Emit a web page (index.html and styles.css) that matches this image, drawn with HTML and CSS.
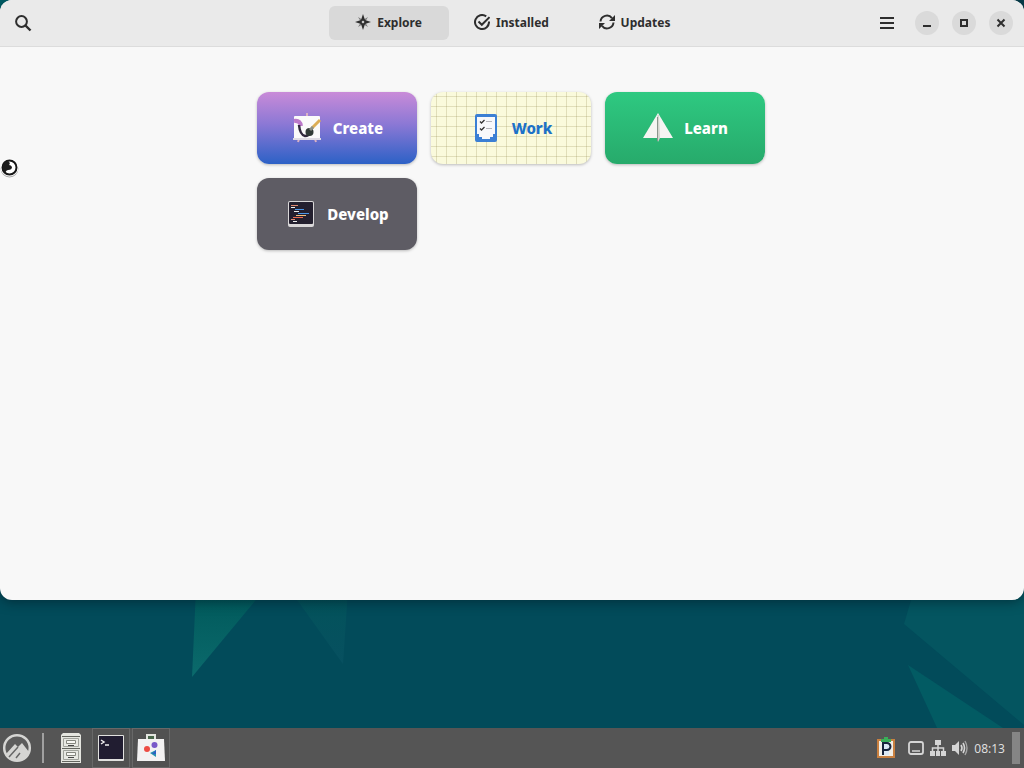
FILE: index.html
```html
<!DOCTYPE html>
<html lang="en">
<head>
<meta charset="utf-8">
<title>Software</title>
<link rel="stylesheet" href="styles.css">
</head>
<body>
<div class="desktop">
  <svg class="wallpaper" viewBox="0 0 1024 768" preserveAspectRatio="none" aria-hidden="true">
    <defs>
      <linearGradient id="facet" x1="0" y1="0" x2="0" y2="1"><stop offset="0" stop-color="#00585a"/><stop offset="1" stop-color="#0b6a6c"/></linearGradient>
      <linearGradient id="facet-dim" x1="0" y1="0" x2="0" y2="1"><stop offset="0" stop-color="#02535a"/><stop offset="1" stop-color="#075060"/></linearGradient>
    </defs>
    <rect width="1024" height="768" fill="#024b5a"/>
    <path d="M196 590H264L192 677Z" fill="url(#facet)"/>
    <path d="M290 590H348L343 664Z" fill="url(#facet-dim)"/>
    <path d="M914 590H1024V725L904 624Z" fill="#045560"/>
    <path d="M908 665L1006 730H938Z" fill="#025b63"/>
    <path d="M0 0H20V20H0Z" fill="#006068"/>
    <path d="M1000 0H1024V20H1000Z" fill="#063e4c"/>
  </svg>

  <main class="window">
    <header class="titlebar">
      <div class="bar-start">
        <button class="flat-button" aria-label="Search"><svg width="18" height="18" viewBox="0 0 18 18"><circle cx="7.5" cy="7.5" r="5.4" fill="none" stroke="#2e2e2e" stroke-width="2"/><path d="M11.5 11.5L16.5 16.5" stroke="#2e2e2e" stroke-width="2.4"/></svg></button>
      </div>
      <nav class="tabs" aria-label="Views">
        <button class="tab tab-active"><svg width="16" height="16" viewBox="0 0 16 16"><path d="M3 3L8 6L13 3L10 8L13 13L8 10L3 13L6 8Z" fill="#777"/><path d="M8 0L10 6L16 8L10 10L8 16L6 10L0 8L6 6Z" fill="#2e2e2e"/><path d="M8 6.500L9.500 8L8 9.500L6.500 8Z" fill="#ddd"/></svg>Explore</button>
        <button class="tab"><svg width="16" height="16" viewBox="0 0 16 16" fill="none" stroke="#2e2e2e" stroke-width="2"><path d="M12.2 2.4A7 7 0 1 0 15 7.5"/><path d="M4.5 7.5L7.8 10.8L15.5 3.1"/></svg>Installed</button>
        <button class="tab"><svg width="16" height="16" viewBox="0 0 16 16"><g fill="none" stroke="#2e2e2e" stroke-width="2"><path d="M1.5 7.5A6.4 6.4 0 0 1 13 4.2"/><path d="M14.5 8.5A6.4 6.4 0 0 1 3 11.8"/></g><path d="M16 1V7H10ZM0 15V9H6Z" fill="#2e2e2e"/></svg>Updates</button>
      </nav>
      <div class="bar-end">
        <button class="flat-button" aria-label="Main menu"><svg width="14" height="14" viewBox="0 0 14 14"><path d="M0 2H14M0 7H14M0 12H14" stroke="#2e2e2e" stroke-width="2"/></svg></button>
        <div class="controls">
          <button class="control" aria-label="Minimize"><svg width="10" height="10" viewBox="0 0 10 10"><path d="M1 8H9" stroke="#2e2e2e" stroke-width="2"/></svg></button>
          <button class="control" aria-label="Maximize"><svg width="10" height="10" viewBox="0 0 10 10"><path d="M2 2H8V8H2Z" fill="none" stroke="#2e2e2e" stroke-width="2"/></svg></button>
          <button class="control" aria-label="Close"><svg width="10" height="10" viewBox="0 0 10 10"><path d="M1.5 1.5L8.5 8.5M8.5 1.5L1.5 8.5" stroke="#2e2e2e" stroke-width="2"/></svg></button>
        </div>
      </div>
    </header>
    <div class="categories">
      <button class="tile tile-create"><svg width="32" height="32" viewBox="0 0 32 32"><path d="M16 1V4M8 27L7 30M24 27L25 30" stroke="#dab2c4" stroke-width="2"/><rect x="3" y="4" width="26" height="23" rx="1" fill="#fafafa"/><path d="M2 26H30V28H2Z" fill="#dedbe4"/><path d="M3 9Q9 8 10 14" fill="none" stroke="#bb79c9" stroke-width="4"/><path d="M8 13Q9 23 14 24Q18 24 20 20" fill="none" stroke="#30283c" stroke-width="2.500"/><circle cx="18.500" cy="20" r="4" fill="#303a36"/><path d="M21 16L29 8" stroke="#dcad55" stroke-width="3"/><path d="M19 18L22 15" stroke="#8b8f86" stroke-width="3"/></svg>Create</button>
      <button class="tile tile-work"><svg width="32" height="32" viewBox="0 0 32 32"><rect x="5" y="2" width="22" height="28" rx="2" fill="#3b7fd4"/><path d="M7 5H25V22H23V25H20V27H12V25H9V22H7Z" fill="#f7f8fb"/><path d="M10 9.500L11.500 11L14.500 8M10 16.500L11.500 18L14.500 15" fill="none" stroke="#333" stroke-width="1.300"/><path d="M16 9.500H22M16 16.500H22" stroke="#b5b5ba"/></svg>Work</button>
      <button class="tile tile-learn"><svg width="32" height="32" viewBox="0 0 32 32"><path d="M16 1L31 26H1Z" fill="#f5f4f2"/><path d="M15.500 3H17L18 26L16 30L15 26Z" fill="#d3d5cf"/><path d="M15.500 5V29" stroke="#8b958d"/></svg>Learn</button>
      <button class="tile tile-develop"><svg width="32" height="32" viewBox="0 0 32 32"><rect x="3" y="3" width="26" height="26" rx="2" fill="#d9d7d8"/><rect x="4" y="4" width="24" height="22" rx="1" fill="#24202f"/><path d="M6 7.500H13M6 21.500H10" stroke="#e08a70"/><path d="M6 9.500H10M9 13.500H14M8 23.500H12" stroke="#eee"/><path d="M10 11.500H19M13 15.500H24" stroke="#4a96e8"/><path d="M11 17.500H21" stroke="#f0c080"/><path d="M8 19.500H18" stroke="#ee6a50"/></svg>Develop</button>
    </div>
  </main>

  <svg class="busy-cursor" width="20" height="20" viewBox="0 0 20 20" aria-hidden="true"><circle cx="9.500" cy="10.500" r="9" fill="#a9a9a9"/><circle cx="9.500" cy="9.500" r="9" fill="#fff"/><circle cx="9.500" cy="9.500" r="7" fill="#fff" stroke="#161616" stroke-width="2"/><path d="M8 3A6.500 6.500 0 0 0 6 15Q5 13 8 12Q12 12 12 9Q11 7 9 7Q11 5 8 3Z" fill="#1b1b1b"/></svg>

  <footer class="panel">
    <div class="launchers">
      <button class="launcher launcher-menu" aria-label="Applications"><svg width="30" height="30" viewBox="0 0 30 30"><circle cx="15" cy="15" r="12.800" fill="#5c5c5c" stroke="#d5d5d3" stroke-width="2.500"/><path d="M4 21L13 11L16 14L20 10L27 19A13 13 0 0 1 8 26Z" fill="#d5d5d3"/><path d="M7 24L16 14M14 25L18 20" fill="none" stroke="#666" stroke-width="1.500"/></svg></button>
      <span class="separator"></span>
      <button class="launcher" aria-label="Files"><svg width="24" height="32" viewBox="0 0 24 32"><path d="M4 1H20L22 3V31H2V3Z" fill="#e4e5df"/><path d="M3 4.500H21M3 16.500H21M3 29.500H21" stroke="#63655f"/><path d="M4.500 6.500H19.500V14.500H4.500ZM4.500 18.500H19.500V27.500H4.500Z" fill="#e8e9e3" stroke="#a0a29b"/><path d="M7.500 8.500H16.500V11.500H7.500ZM7.500 20.500H16.500V23.500H7.500Z" fill="#f8f8f4" stroke="#85877f"/><path d="M9 13.500H15M9 25.500H15" stroke="#444"/></svg></button>
      <button class="launcher launcher-open" aria-label="Terminal"><svg width="28" height="28" viewBox="0 0 28 28"><rect x="1" y="1" width="26" height="26" rx="1" fill="#e1e1df"/><rect x="2" y="2" width="24" height="23" fill="#211d31"/><path d="M4 6L7 8L4 10M8 11H12" fill="none" stroke="#eee" stroke-width="1.500"/></svg></button>
      <button class="launcher launcher-open" aria-label="Software"><svg width="30" height="30" viewBox="0 0 30 30"><path d="M11 6V2H19V6" fill="none" stroke="#e2e4df" stroke-width="2"/><path d="M12 3H18V6H12Z" fill="#48664a"/><path d="M2 6H28L29 28H1Z" fill="#f3f2f2"/><circle cx="18.500" cy="12" r="3" fill="#7959c9"/><circle cx="11" cy="16" r="3" fill="#ed4c43"/><path d="M14 20L20 17V24Z" fill="#258fae"/><path d="M16 21L20 17V21Z" fill="#2c5ec5"/></svg></button>
    </div>
    <div class="tray">
      <button class="tray-button tray-clipboard" aria-label="Clipboard"><svg width="20" height="22" viewBox="0 0 20 22"><rect x="1" y="2" width="18" height="19" fill="#c98040"/><path d="M3 4H17V19H3Z" fill="#f2efe8"/><path d="M5 2H8V0H12V2H15V5H5Z" fill="#39ae58"/><path d="M7 5H13V18H7Z" fill="#dce8f4"/><path d="M7 18V6H11A3 3 0 0 1 11 13H8" fill="none" stroke="#17243c" stroke-width="2"/></svg></button>
      <button class="tray-button" aria-label="Display"><svg width="16" height="16" viewBox="0 0 16 16"><rect x="1" y="2" width="14" height="12" rx="2" fill="none" stroke="#d5d5d5" stroke-width="1.800"/><path d="M4 11H12" stroke="#d5d5d5" stroke-width="1.500"/></svg></button>
      <button class="tray-button" aria-label="Network"><svg width="16" height="16" viewBox="0 0 16 16"><path d="M5 0H11V5H5ZM0 11H5V16H0ZM6 11H10V16H6ZM11 11H16V16H11Z" fill="#d5d5d5"/><path d="M8 4V12M2.500 12V8H13.500V12" fill="none" stroke="#d5d5d5" stroke-width="1.500"/></svg></button>
      <button class="tray-button" aria-label="Volume"><svg width="16" height="16" viewBox="0 0 16 16"><path d="M0 5H3L7 1V15L3 11H0Z" fill="#d5d5d5"/><path d="M9 5Q11 8 9 11M11 3Q14 8 11 13" fill="none" stroke="#d5d5d5" stroke-width="1.600"/><path d="M13 1Q17 8 13 15" fill="none" stroke="#a5a5a5" stroke-width="1.400"/></svg></button>
      <time class="clock">08:13</time>
      <button class="show-desktop" aria-label="Show desktop"></button>
    </div>
  </footer>
</div>
</body>
</html>
```

FILE: styles.css
```css
* { box-sizing: border-box; }

body {
  margin: 0;
  font-family: "Noto Sans", sans-serif;
  color: #2e2e2e;
}

button {
  margin: 0;
  padding: 0;
  border: 0;
  background: none;
  color: inherit;
  font: inherit;
}

svg { display: block; flex: none; }

.desktop {
  display: grid;
  grid-template-rows: 1fr auto;
  gap: 128px;
  min-height: 100vh;
  position: relative;
  background: #024b5a;
}

.wallpaper {
  position: absolute;
  inset: 0;
  width: 100%;
  height: 100%;
}

.window {
  position: relative;
  overflow: hidden;
  border-radius: 12px;
  background: #f8f8f8;
  box-shadow: 0 2px 12px rgba(0, 20, 30, 0.5);
}

.titlebar {
  display: grid;
  grid-template-columns: 1fr auto 1fr;
  align-items: center;
  padding: 6px 11px;
  background: #eaeaea;
  border-bottom: 1px solid #dcdcdc;
}

.bar-start, .bar-end, .tabs, .controls {
  display: flex;
  align-items: center;
}

.bar-end { justify-content: flex-end; gap: 16px; }
.controls { gap: 13px; }
.tabs { gap: 3px; }

.flat-button {
  display: grid;
  place-items: center;
  width: 24px;
  height: 34px;
}

.tab {
  display: flex;
  align-items: center;
  justify-content: center;
  gap: 6px;
  width: 120px;
  height: 34px;
  padding: 0 1px 2px 0;
  border-radius: 6px;
  font-size: 12px;
  font-weight: 700;
}

.tab-active { background: #d9d9d9; }

.control {
  display: grid;
  place-items: center;
  width: 24px;
  height: 24px;
  border-radius: 50%;
  background: #dadada;
}

.categories {
  display: grid;
  grid-template-columns: repeat(3, 160px);
  justify-content: center;
  gap: 14px;
  padding: 45px 16px 45px 14px;
}

.tile {
  display: flex;
  align-items: center;
  justify-content: center;
  gap: 10px;
  height: 72px;
  border-radius: 12px;
  box-shadow: 0 1px 3px rgba(0, 0, 0, 0.25);
  color: #fff;
  font-size: 15px;
  font-weight: 800;
}

.tile-create { background: linear-gradient(#c98bd8, #8b78d5 45%, #2c61c6); }

.tile-work {
  color: #1c71c8;
  background-color: #fafadc;
  background-image:
    linear-gradient(rgba(150, 140, 80, 0.25) 1px, transparent 1px),
    linear-gradient(90deg, rgba(150, 140, 80, 0.25) 1px, transparent 1px);
  background-size: 10px 10px;
  background-position: 5px 4px;
}

.tile-learn { background: linear-gradient(#2ec981, #27aa6b); }
.tile-develop { background: #5e5c64; }

.busy-cursor {
  position: absolute;
  left: 0;
  top: 158px;
}

.panel {
  position: relative;
  display: flex;
  justify-content: space-between;
  height: 40px;
  background: #555;
}

.launchers, .tray { display: flex; align-items: center; }

.launcher {
  display: grid;
  place-items: center;
  width: 40px;
  height: 40px;
}

.launcher-menu { width: 34px; }

.separator {
  width: 2px;
  height: 30px;
  margin: 0 7px 0 8px;
  background: #a0a0a0;
}

.launcher-open {
  width: 38px;
  margin-left: 1px;
  border: 1px solid #686868;
  background: #515151;
}

.launcher-open + .launcher-open { margin-left: 2px; }

.tray { gap: 6px; padding-right: 4px; }
.tray-clipboard { margin-right: 6px; }

.clock {
  margin-right: 1px;
  color: #dedede;
  font-size: 12px;
}

.show-desktop {
  width: 8px;
  height: 32px;
  background: #858585;
}
```
